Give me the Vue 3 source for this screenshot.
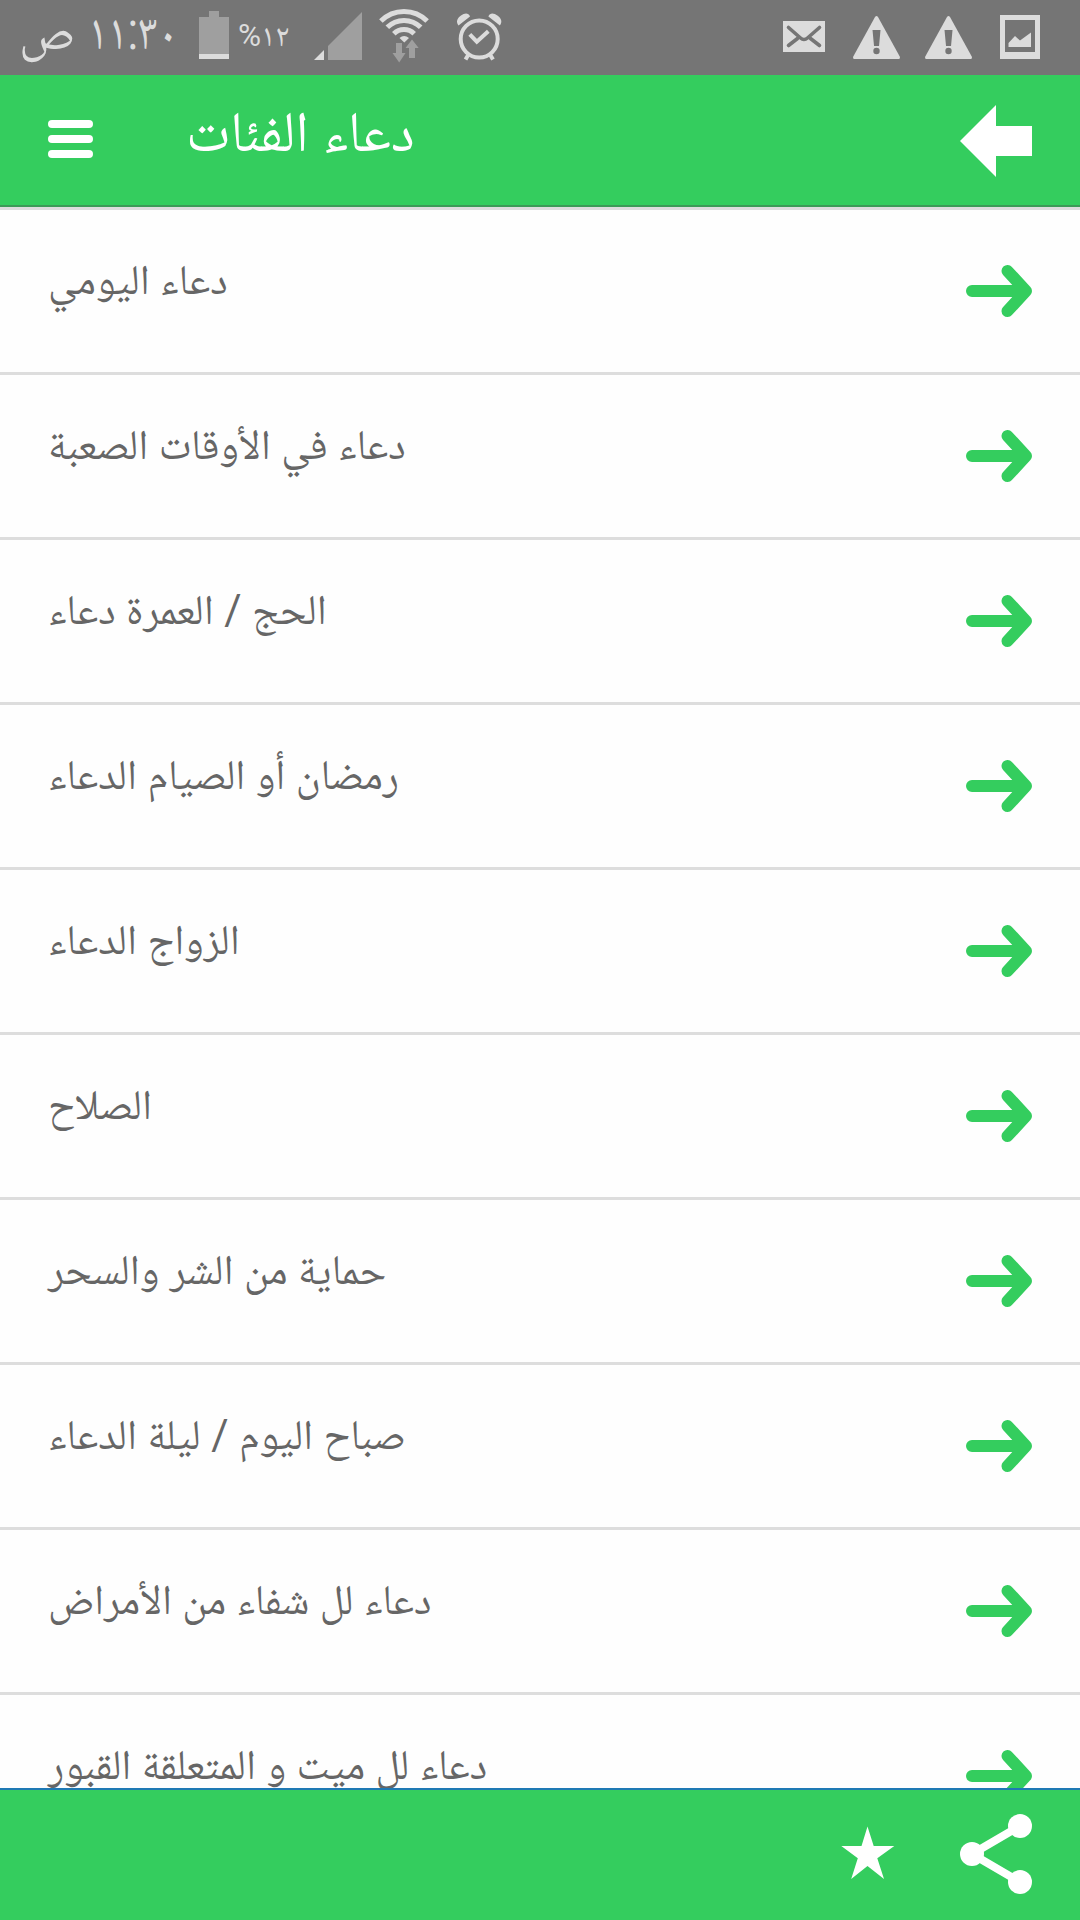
<script setup>
    import { ref } from 'vue';

    const title = ref('دعاء الفئات');

    const categories = ref([
        'دعاء اليومي',
        'دعاء في الأوقات الصعبة',
        'الحج / العمرة دعاء',
        'رمضان أو الصيام الدعاء',
        'الزواج الدعاء',
        'الصلاح',
        'حماية من الشر والسحر',
        'صباح اليوم / ليلة الدعاء',
        'دعاء لل شفاء من الأمراض',
        'دعاء لل ميت و المتعلقة القبور',
    ]);
</script>

<template>
    <div class="screen">
        <div class="statusBar">
            <span class="time" dir="rtl"><span class="clock">١١:٣٠</span> <span>ص</span></span>
            <svg class="battery" width="30" height="75" viewBox="199 0 30 75">
                <path d="M199 17h10v-6h10v6h10v42h-30z" fill="#9f9f9f" />
                <path d="M199 54h30v5h-30z" fill="#dcdcdc" />
            </svg>
            <span class="percent">%١٢</span>
            <svg class="signal" width="48" height="75" viewBox="314 0 48 75">
                <path d="M314 60l10-10v10z" fill="#dcdcdc" />
                <path d="M328 60V46l34-34v48z" fill="#9f9f9f" />
            </svg>
            <svg class="wifi" width="50" height="75" viewBox="379 0 50 75">
                <g fill="none" stroke="#dcdcdc" stroke-width="5">
                    <path d="M380.900 21A32.600 32.600 0 0 1 427.100 21" />
                    <path d="M387.300 27.300A23.600 23.600 0 0 1 420.700 27.300" />
                    <path d="M393.800 33.800A14.500 14.500 0 0 1 414.200 33.800" />
                </g>
                <path d="M399.500 38Q404 34 409 38L404.300 42.500z" fill="#dcdcdc" />
                <path d="M396 43h6v10h3.500L399.200 62.500 392.500 53h3.500z" fill="#9f9f9f" />
                <path d="M409 58V48h-3.500L412 39.500 418.700 48H415v10z" fill="#9f9f9f" />
            </svg>
            <svg class="alarm" width="46" height="75" viewBox="456 0 46 75">
                <g fill="none" stroke="#dcdcdc" stroke-width="4">
                    <circle cx="479.200" cy="39" r="18.500" />
                    <path d="M469.800 34.300l7 7.400 11.500-10.500" />
                    <path d="M468.500 54.500l-3 5M490 54.500l3 5" />
                </g>
                <path d="M458.500 25.500C455.500 21.500 457.500 18 461 15.500S468.500 12.500 470 16.500zM499.900 25.500C502.900 21.500 500.900 18 497.400 15.500S489.900 12.500 488.400 16.500z" fill="#dcdcdc" />
            </svg>
            <div class="notices">
                <svg width="42" height="75" viewBox="783 0 42 75">
                    <path d="M783 21h42v31h-42z" fill="#dcdcdc" />
                    <path d="M788.500 27.500l12 10.500q3.500 3 7 0l12-10.500M788.500 45.500l9-7M819.500 45.500l-9-7" fill="none" stroke="#757575" stroke-width="3.600" stroke-linecap="round" />
                </svg>
                <svg v-for="n in 2" :key="n" class="warning" width="47" height="75" viewBox="853 0 47 75">
                    <path d="M875 17q1.500-2 3 0l22 40q0 2-1 2h-45q-1 0-1-2z" fill="#dcdcdc" />
                    <path d="M872.500 30h8l-1.500 16h-5z" fill="#757575" />
                    <circle cx="876.500" cy="51" r="3.200" fill="#757575" />
                </svg>
                <svg class="gallery" width="40" height="75" viewBox="1000 0 40 75">
                    <path d="M1000 15h40v44h-40z" fill="#dcdcdc" />
                    <path d="M1005 20h30v32h-30z" fill="#757575" />
                    <path d="M1008.500 47v-4l6.500-7 5 4.500 11-8V47z" fill="#dcdcdc" />
                </svg>
            </div>
        </div>

        <header class="header">
            <button class="menu">
                <i></i>
                <i></i>
                <i></i>
            </button>
            <h1>{{ title }}</h1>
            <svg class="back" width="72" height="72" viewBox="0 0 72 72">
                <path d="M0 36L36 0v21h36v30H36v21z" fill="#fff" />
            </svg>
        </header>

        <ul class="list">
            <li v-for="(category, index) in categories" :key="index" class="row">
                <p>{{ category }}</p>
                <svg width="66" height="54" viewBox="0 0 66 54">
                    <path d="M6 27h54M41.500 7L60 27 41.500 47" fill="none" stroke="#34cd5e" stroke-width="12" stroke-linecap="round" stroke-linejoin="round" />
                </svg>
            </li>
        </ul>

        <footer class="footer">
            <svg class="star" width="54" height="54" viewBox="841 1827 54 54">
                <path d="M867.500 1826.500L873.700 1846H894.300L877.300 1858.300 884 1879 867.500 1866 851.200 1879 857.800 1858.300 841.300 1846H861.500z" fill="#fff" />
            </svg>
            <svg width="72" height="80" viewBox="0 0 72 80">
                <path d="M60 12L12 40l48 28" fill="none" stroke="#fff" stroke-width="8" />
                <circle cx="60" cy="12" r="12" fill="#fff" />
                <circle cx="12" cy="40" r="12" fill="#fff" />
                <circle cx="60" cy="68" r="12" fill="#fff" />
            </svg>
        </footer>
    </div>
</template>

<style>
    body {
        margin: 0;
    }
</style>

<style scoped>
    .screen {
        width: 1080px;
        height: 1920px;
        display: flex;
        flex-direction: column;
        overflow: hidden;
        background-color: #fefefe;
        font-family: Roboto, "Noto Naskh Arabic", "DejaVu Sans", serif;
    }
    svg {
        display: block;
        flex: none;
        overflow: visible;
    }
    .statusBar {
        height: 75px;
        flex: none;
        display: flex;
        padding: 0 40px 0 19px;
        background-color: #757575;
        color: #dcdcdc;
    }
    .time {
        width: 180px;
        font-size: 51px;
        line-height: 64px;
        text-align: left;
        white-space: nowrap;
    }
    .clock {
        display: inline-block;
        transform: scaleX(0.86);
        transform-origin: left;
    }
    .percent {
        width: 76px;
        margin-left: 9px;
        font-size: 31.5px;
        line-height: 72px;
        white-space: nowrap;
    }
    .wifi {
        margin-left: 17px;
    }
    .alarm {
        margin-left: 27px;
    }
    .notices {
        display: flex;
        margin-left: auto;
    }
    .warning {
        margin-left: 28px;
    }
    .warning + .warning {
        margin-left: 25px;
    }
    .gallery {
        margin-left: 28px;
    }
    .header {
        height: 128px;
        flex: none;
        display: flex;
        align-items: center;
        padding: 2px 48px 0;
        background-color: #34cd5e;
        border-bottom: 2px solid #3c9a57;
    }
    .menu {
        width: 45px;
        margin-bottom: 4px;
        padding: 0;
        border: 0;
        background: none;
        display: flex;
        flex-direction: column;
        gap: 7px;
    }
    .menu i {
        height: 8px;
        border-radius: 4px;
        background-color: white;
    }
    h1 {
        flex: 1;
        margin: 0 0 19px 93px;
        font-size: 57px;
        font-weight: 400;
        line-height: 80px;
        color: white;
    }
    .list {
        flex: 1;
        min-height: 0;
        overflow: hidden;
        margin: 0;
        padding: 0;
        list-style: none;
    }
    .row {
        height: 162px;
        display: flex;
        justify-content: space-between;
        align-items: center;
        padding: 0 48px;
        border-top: 3px solid #dddddd;
    }
    .row p {
        margin: 0 0 22px;
        font-size: 42px;
        line-height: 60px;
        color: #666666;
    }
    .footer {
        height: 128px;
        flex: none;
        display: flex;
        justify-content: flex-end;
        align-items: center;
        padding: 0 48px 2px;
        border-top: 2px solid #1e79b4;
        background-color: #34cd5e;
    }
    .star {
        margin-right: 65px;
    }
</style>
